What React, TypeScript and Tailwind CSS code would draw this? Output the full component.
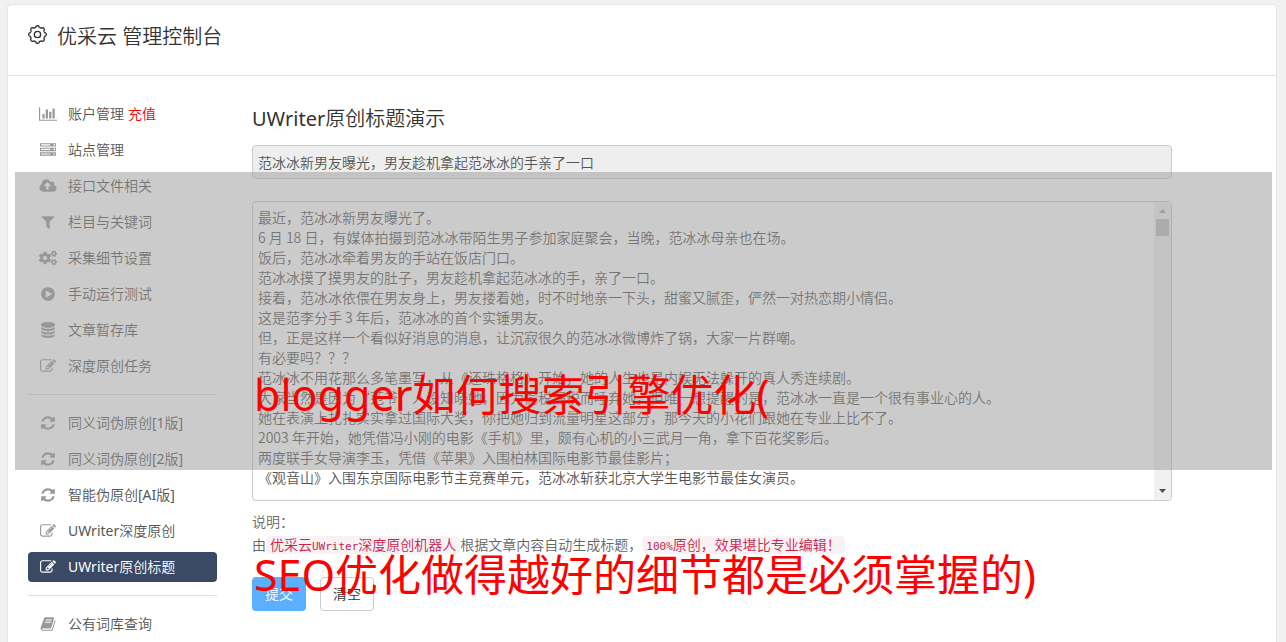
import React from 'react';
import { FaCogs } from 'react-icons/fa';

interface IconProps {
  path: string;
  viewBox?: string;
  className?: string;
}

interface MenuItem {
  label: string;
  icon: React.ReactNode;
  badge?: string;
  active?: boolean;
}

const PATHS = {
  chart:
    'M640 896v512h-256v-512h256zm384-512v1024h-256v-1024h256zm1024 1152v128h-2048v-1536h128v1408h1920zm-640-896v768h-256v-768h256zm384-384v1152h-256v-1152h256z',
  server:
    'M128 1408h1024v-128h-1024v128zm0-512h1024v-128h-1024v128zm1568 448q0-40-28-68t-68-28-68 28-28 68 28 68 68 28 68-28 28-68zm-1568-960h1024v-128h-1024v128zm1568 448q0-40-28-68t-68-28-68 28-28 68 28 68 68 28 68-28 28-68zm0-512q0-40-28-68t-68-28-68 28-28 68 28 68 68 28 68-28 28-68zm96 832v384h-1792v-384h1792zm0-512v384h-1792v-384h1792zm0-512v384h-1792v-384h1792z',
  cloud:
    'M1280 864q0-14-9-23l-352-352q-9-9-23-9t-23 9l-351 351q-10 12-10 24 0 14 9 23t23 9h224v352q0 13 9.5 22.5t22.5 9.5h192q13 0 22.5-9.5t9.5-22.5v-352h224q13 0 22.5-9.5t9.5-22.5zm640 288q0 159-112.5 271.5t-271.5 112.5h-1088q-185 0-316.5-131.5t-131.5-316.5q0-130 70-240t188-165q-2-30-2-43 0-212 150-362t362-150q156 0 285.5 87t188.5 231q71-62 166-62 106 0 181 75t75 181q0 76-41 138 130 31 213.5 135.5t83.5 238.5z',
  filter:
    'M1595 295q17 41-14 70l-493 493v742q0 42-39 59-13 5-25 5-27 0-45-19l-256-256q-19-19-19-45v-486l-493-493q-31-29-14-70 17-39 59-39h1280q42 0 59 39z',
  play:
    'M896 128q209 0 385.5 103t279.5 279.5 103 385.5-103 385.5-279.5 279.5-385.5 103-385.5-103-279.5-279.5-103-385.5 103-385.5 279.5-279.5 385.5-103zm384 823q32-18 32-55t-32-55l-544-320q-31-19-64-1-32 19-32 56v640q0 37 32 56 16 8 32 8 17 0 32-9z',
  database:
    'M896 768q237 0 443-43t325-127v170q0 69-103 128t-280 93.5-385 34.5-385-34.5-280-93.5-103-128v-170q119 84 325 127t443 43zm0 768q237 0 443-43t325-127v170q0 69-103 128t-280 93.5-385 34.5-385-34.5-280-93.5-103-128v-170q119 84 325 127t443 43zm0-384q237 0 443-43t325-127v170q0 69-103 128t-280 93.5-385 34.5-385-34.5-280-93.5-103-128v-170q119 84 325 127t443 43zm0-1152q208 0 385 34.5t280 93.5 103 128v128q0 69-103 128t-280 93.5-385 34.5-385-34.5-280-93.5-103-128v-128q0-69 103-128t280-93.5 385-34.5z',
  edit:
    'M888 1184l116-116-152-152-116 116v56h96v96h56zm440-720q-16-16-33 1l-350 350q-17 17-1 33t33-1l350-350q17-17 1-33zm80 594v190q0 119-84.5 203.5t-203.5 84.5h-832q-119 0-203.5-84.5t-84.5-203.5v-832q0-119 84.5-203.5t203.5-84.5h832q63 0 117 25 15 7 18 23 3 17-9 29l-49 49q-14 14-32 8-23-6-45-6h-832q-66 0-113 47t-47 113v832q0 66 47 113t113 47h832q66 0 113-47t47-113v-126q0-13 9-22l64-64q15-15 35-7t20 29zm-96-738l288 288-672 672h-288v-288zm444 132l-92 92-288-288 92-92q28-28 68-28t68 28l152 152q28 28 28 68t-28 68z',
  refresh:
    'M1639 1056q0 5-1 7-64 268-268 434.5t-478 166.5q-146 0-282.5-55t-243.5-157l-129 129q-19 19-45 19t-45-19-19-45v-448q0-26 19-45t45-19h448q26 0 45 19t19 45-19 45l-137 137q71 66 161 102t187 36q134 0 250-65t186-179q11-17 53-117 8-23 30-23h192q13 0 22.5 9.5t9.5 22.5zm25-800v448q0 26-19 45t-45 19h-448q-26 0-45-19t-19-45 19-45l138-138q-148-137-349-137-134 0-250 65t-186 179q-11 17-53 117-8 23-30 23h-199q-13 0-22.5-9.5t-9.5-22.5v-7q65-268 270-434.5t480-166.5q146 0 284 55.5t245 156.5l130-129q19-19 45-19t45 19 19 45z',
  book:
    'M1703 478q40 57 18 129l-275 906q-19 64-76.5 107.5t-122.5 43.5h-923q-77 0-148.5-53.5t-99.5-131.5q-24-67-2-127 0-4 3-27t4-37q1-8-3-21.5t-3-19.5q2-11 8-21t16.5-23.5 16.5-23.5q23-38 45-91.5t30-91.5q3-10 .5-30t-.5-28q3-11 17-28t17-23q21-36 42-92t25-90q1-9-2.5-32t.5-28q4-13 22-30.5t22-22.5q19-26 42.5-84.5t27.5-96.5q1-8-3-25.5t-2-26.5q2-8 9-18t18-23 17-21q8-12 16.5-30.5t15-35 16-36 19.5-32 26.5-23.5 36-11.5 47.5 5.5l-1 3q38-9 51-9h761q74 0 114 56t18 130l-274 906q-36 119-71.5 153.5t-128.5 34.5h-869q-27 0-38 15-11 16-1 43 24 70 144 70h923q29 0 56-15.5t35-41.5l300-987q7-22 5-57 38 15 59 43zm-1064 2q-4 13 2 22.5t20 9.5h608q13 0 25.5-9.5t16.5-22.5l21-64q4-13-2-22.5t-20-9.5h-608q-13 0-25.5 9.5t-16.5 22.5zm-83 256q-4 13 2 22.5t20 9.5h608q13 0 25.5-9.5t16.5-22.5l21-64q4-13-2-22.5t-20-9.5h-608q-13 0-25.5 9.5t-16.5 22.5z',
};

const Icon: React.FC<IconProps> = ({ path, viewBox = '0 0 1792 1792', className = 'h-4 w-4' }) => (
  <svg viewBox={viewBox} className={className} fill="currentColor" aria-hidden="true">
    <path d={path} />
  </svg>
);

// Outline of the header gear: a ring with eight soft teeth
const gearPath = (): string => {
  const points: string[] = [];
  for (let i = 0; i < 160; i++) {
    const a = (i / 160) * Math.PI * 2;
    const r = 7.6 + 0.7 * Math.tanh(2 * Math.cos(8 * a));
    points.push(`${(9 + r * Math.cos(a)).toFixed(2)} ${(9 + r * Math.sin(a)).toFixed(2)}`);
  }
  return `M${points.join('L')}Z`;
};

const GearIcon: React.FC = () => (
  <svg viewBox="0 0 18 18" className="h-[19px] w-[19px]" fill="none" stroke="currentColor" strokeWidth="1.3" aria-hidden="true">
    <path d={gearPath()} />
    <circle cx="9" cy="9" r="3" />
  </svg>
);

const groups: MenuItem[][] = [
  [
    { label: '账户管理', badge: '充值', icon: <Icon path={PATHS.chart} viewBox="0 0 2048 1792" className="h-4 w-[18px]" /> },
    { label: '站点管理', icon: <Icon path={PATHS.server} /> },
    { label: '接口文件相关', icon: <Icon path={PATHS.cloud} viewBox="0 0 1920 1792" className="h-4 w-[18px]" /> },
    { label: '栏目与关键词', icon: <Icon path={PATHS.filter} /> },
    { label: '采集细节设置', icon: <FaCogs className="h-4 w-[18px]" /> },
    { label: '手动运行测试', icon: <Icon path={PATHS.play} /> },
    { label: '文章暂存库', icon: <Icon path={PATHS.database} /> },
    { label: '深度原创任务', icon: <Icon path={PATHS.edit} /> },
  ],
  [
    { label: '同义词伪原创[1版]', icon: <Icon path={PATHS.refresh} /> },
    { label: '同义词伪原创[2版]', icon: <Icon path={PATHS.refresh} /> },
    { label: '智能伪原创[AI版]', icon: <Icon path={PATHS.refresh} /> },
    { label: 'UWriter深度原创', icon: <Icon path={PATHS.edit} /> },
    { label: 'UWriter原创标题', icon: <Icon path={PATHS.edit} />, active: true },
  ],
  [{ label: '公有词库查询', icon: <Icon path={PATHS.book} /> }],
];

const article = [
  '最近，范冰冰新男友曝光了。',
  '6 月 18 日，有媒体拍摄到范冰冰带陌生男子参加家庭聚会，当晚，范冰冰母亲也在场。',
  '饭后，范冰冰牵着男友的手站在饭店门口。',
  '范冰冰摸了摸男友的肚子，男友趁机拿起范冰冰的手，亲了一口。',
  '接着，范冰冰依偎在男友身上，男友搂着她，时不时地亲一下头，甜蜜又腻歪，俨然一对热恋期小情侣。',
  '这是范李分手 3 年后，范冰冰的首个实锤男友。',
  '但，正是这样一个看似好消息的消息，让沉寂很久的范冰冰微博炸了锅，大家一片群嘲。',
  '有必要吗？？？',
  '范冰冰不用花那么多笔墨写，从《还珠格格》开始，她的人生也是内娱无法躲开的真人秀连续剧。',
  '大家当然是因为“范爷”人设知晓她，因为偷税漏税而唾弃她，但唯一想提醒的是，范冰冰一直是一个很有事业心的人。',
  '她在表演上扎扎实实拿过国际大奖，你把她归到流量明星这部分，那今天的小花们跟她在专业上比不了。',
  '2003 年开始，她凭借冯小刚的电影《手机》里，颇有心机的小三武月一角，拿下百花奖影后。',
  '两度联手女导演李玉，凭借《苹果》入围柏林国际电影节最佳影片；',
  '《观音山》入围东京国际电影节主竞赛单元，范冰冰斩获北京大学生电影节最佳女演员。',
].join('\n');

const Sidebar: React.FC = () => (
  <nav className="w-[189px] shrink-0 pt-[23px]">
    {groups.map((items, index) => (
      <ul key={index} className={`space-y-1.5 ${index > 0 ? 'mt-[13px] border-t border-[#ddd] pt-[13px]' : ''}`}>
        {items.map((item) => (
          <li key={item.label}>
            <a
              href="#"
              className={`flex h-[30px] items-center gap-[11px] rounded pl-[11px] ${
                item.active ? 'bg-[#3a4964] text-white' : 'text-[#555]'
              }`}
            >
              <span className={`flex w-[18px] justify-center ${item.active ? 'text-white' : 'text-[#999]'}`}>
                {item.icon}
              </span>
              <span>
                {item.label}
                {item.badge && <span className="ml-1 text-[#f00]">{item.badge}</span>}
              </span>
            </a>
          </li>
        ))}
      </ul>
    ))}
  </nav>
);

const TitleDemo: React.FC = () => (
  <main className="mr-26 min-w-0 flex-1 pt-[29px]">
    <h2 className="text-xl leading-7 text-[#333]">UWriter原创标题演示</h2>
    <input
      type="text"
      readOnly
      aria-label="文章标题"
      defaultValue="范冰冰新男友曝光，男友趁机拿起范冰冰的手亲了一口"
      className="mt-3 block h-[34px] w-full rounded border border-[#ccc] bg-[#eee] px-[5px] text-[#555] outline-none"
    />
    <div className="mt-[22px] flex h-[300px] overflow-hidden rounded border border-[#ccc]">
      <textarea
        aria-label="文章内容"
        defaultValue={article}
        className="min-w-0 flex-1 resize-none overflow-hidden p-[5px] font-['Noto_Sans_CJK_SC_DemiLight','Noto_Sans_CJK_SC_Light','Noto_Sans_CJK_SC',sans-serif] leading-5 text-[#555] outline-none"
      />
      <div className="flex w-[17px] flex-col items-center justify-between bg-[#f0f0f0]" aria-hidden="true">
        <div className="flex flex-col items-center">
          <svg viewBox="0 0 7 4" className="mt-[7px] mb-[6px] h-1 w-[7px]" fill="#a3a3a3">
            <path d="M3.5 0L7 4H0z" />
          </svg>
          <div className="h-[17px] w-[13px] bg-[#c1c1c1]" />
        </div>
        <svg viewBox="0 0 7 4" className="mb-[7px] h-1 w-[7px]" fill="#505050">
          <path d="M0 0H7L3.5 4z" />
        </svg>
      </div>
    </div>
    <div className="mt-[9px] leading-[23px] text-[#666]">
      <p>说明：</p>
      <p>
        由
        <code className="rounded bg-[#f9f2f4] px-1 py-px font-['DejaVu_Sans_Mono','Noto_Sans_CJK_SC_DemiLight','Noto_Sans_CJK_SC_Light','Noto_Sans_CJK_SC',monospace] text-[#c7254e]">
          优采云<span className="text-[11px]">UWriter</span>深度原创机器人
        </code>
        根据文章内容自动生成标题，
        <code className="rounded bg-[#f9f2f4] px-1 py-px font-['DejaVu_Sans_Mono','Noto_Sans_CJK_SC_DemiLight','Noto_Sans_CJK_SC_Light','Noto_Sans_CJK_SC',monospace] text-[#c7254e]">
          <span className="text-[11px]">100%</span>原创，效果堪比专业编辑！
        </code>
      </p>
    </div>
    <div className="mt-[19px] flex gap-[14px]">
      <button type="button" className="h-[34px] rounded bg-[#5aafff] px-[13px] text-white">
        提交
      </button>
      <button type="button" className="h-[34px] rounded border border-[#ccc] bg-white px-3 text-[#333]">
        清空
      </button>
    </div>
  </main>
);

const App: React.FC = () => {
  return (
    <div className="relative flex min-h-screen flex-col bg-[#f1f1f1] pt-1 pr-[9px] pl-[7px] font-['Noto_Sans','Noto_Sans_CJK_SC_DemiLight','Noto_Sans_CJK_SC_Light','Noto_Sans_CJK_SC',sans-serif] text-sm">
      <div className="flex-1 rounded-t border border-b-0 border-[#e5e5e5] bg-white">
        <header className="flex h-[71px] items-start gap-[10px] border-b border-[#e5e5e5] px-5 pt-5 text-[#333]">
          <GearIcon />
          <h1 className="text-xl leading-6">优采云 管理控制台</h1>
        </header>
        <div className="flex gap-[35px] pl-5">
          <Sidebar />
          <TitleDemo />
        </div>
      </div>

      {/* Grey band and the caption drawn over the page */}
      <div className="pointer-events-none absolute top-[172px] right-[14px] left-[15px] h-[298px] bg-[#989898]/50" />
      <div className="pointer-events-none absolute top-[305px] left-[254px] font-['Noto_Sans','Noto_Sans_CJK_SC',sans-serif] text-[43px] leading-[180px] whitespace-nowrap text-[#f00]">
        <p>blogger如何搜索引擎优化(</p>
        <p>SEO优化做得越好的细节都是必须掌握的)</p>
      </div>
    </div>
  );
};

export default App;
